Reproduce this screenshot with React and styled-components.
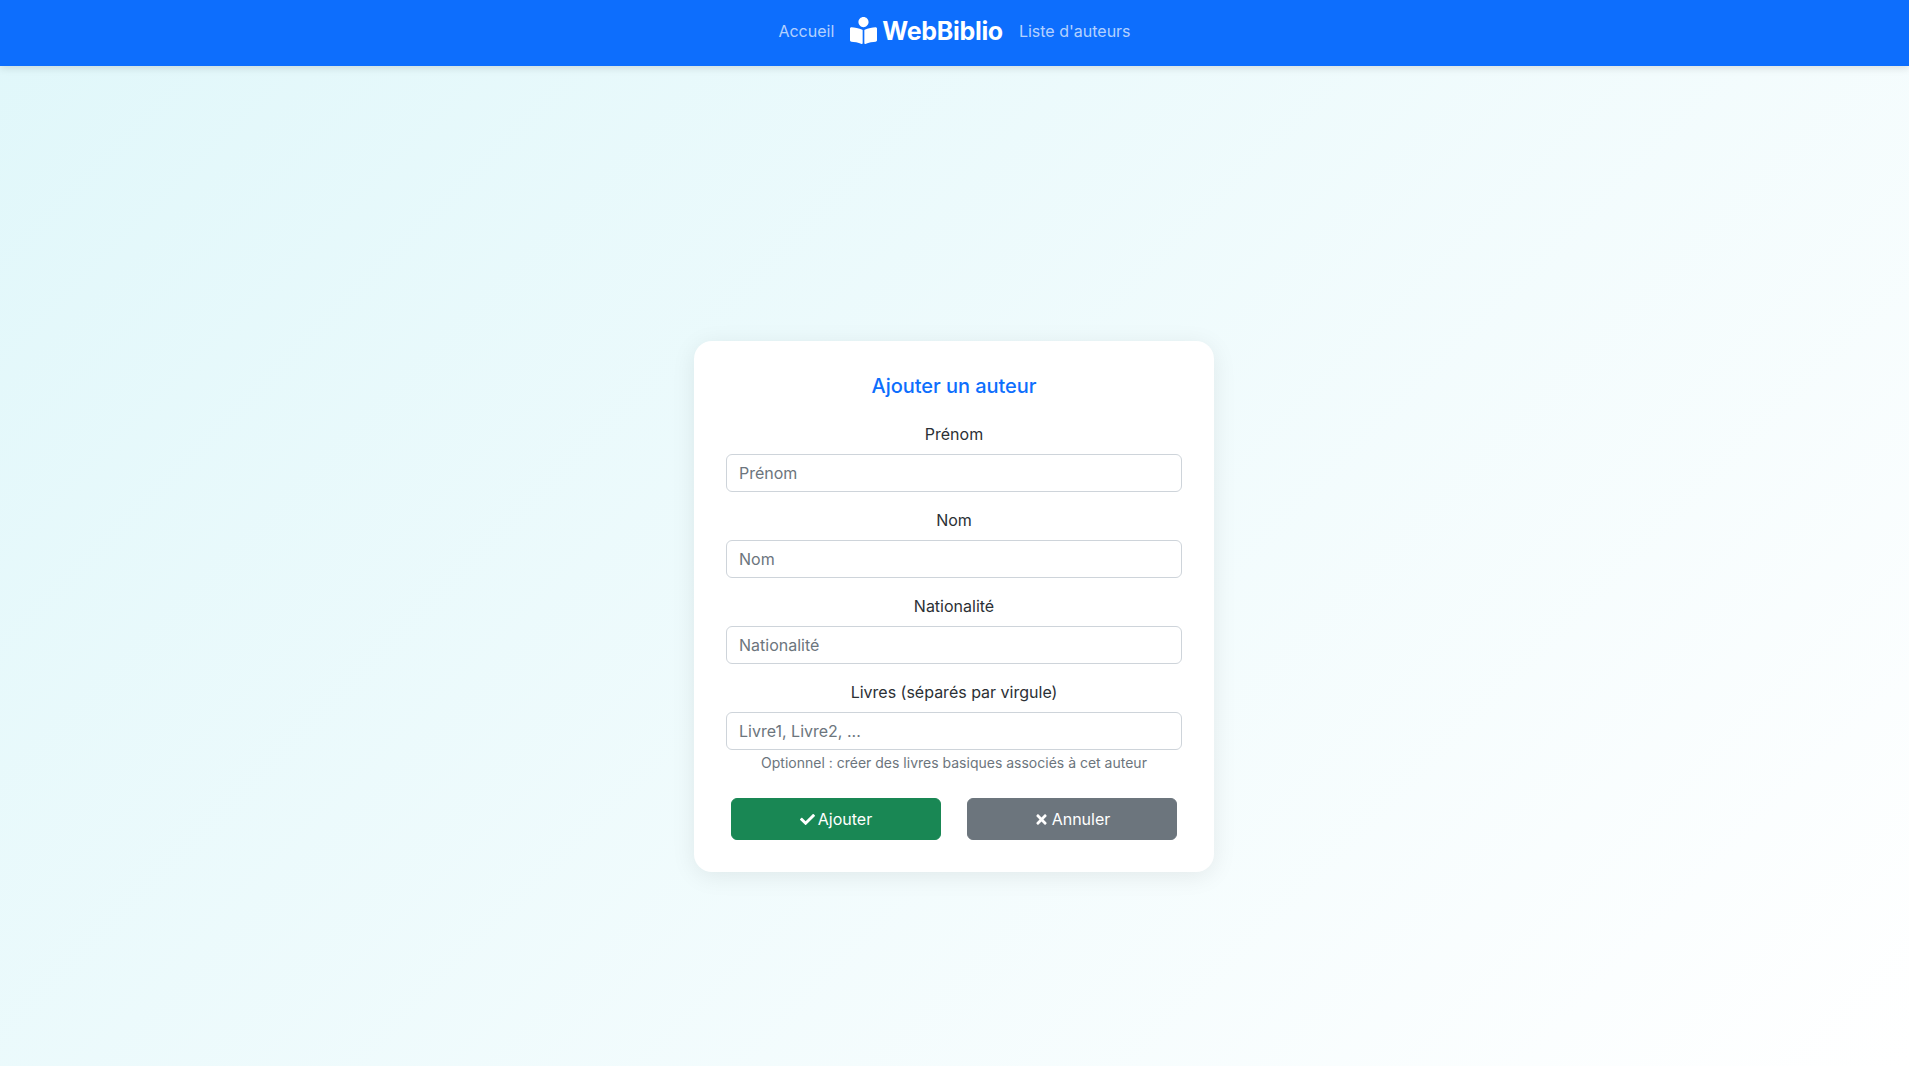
import { createGlobalStyle } from "styled-components";
import styled from "styled-components";
import { FaBookReader, FaCheck, FaTimes } from "react-icons/fa";

const GlobalStyle = createGlobalStyle`
  * {
    box-sizing: border-box;
  }
  html, body {
    margin: 0;
    height: 100%;
  }
  body {
    font-family: Inter, "Liberation Sans", sans-serif;
    font-size: 16px;
    line-height: 1.5;
    color: #212529;
  }
`;

const Page = styled.div`
  min-height: 1066px;
  background: linear-gradient(135deg, #e0f7fa 0%, #ffffff 100%);
`;

const Header = styled.header`
  height: 66px;
  background-color: #0d6efd;
  box-shadow: 0 2px 8px rgba(0, 0, 0, 0.12);
  display: flex;
  align-items: center;
  justify-content: center;
  gap: 16px;
  padding-bottom: 4px;
`;

const NavLink = styled.a`
  color: rgba(255, 255, 255, 0.7);
  font-size: 16px;
  text-decoration: none;
`;

const Brand = styled.a`
  display: flex;
  align-items: center;
  gap: 5px;
  padding-top: 1px;
  color: #fff;
  font-size: 25px;
  font-weight: 700;
  letter-spacing: -0.3px;
  text-decoration: none;
`;

const BrandIcon = styled(FaBookReader)`
  margin-bottom: 3px;
`;

const Main = styled.main`
  display: flex;
  justify-content: center;
  padding: 275px 1px 0 0;
`;

const Card = styled.form`
  width: 520px;
  height: 531px;
  background: #fff;
  border-radius: 18px;
  box-shadow: 0 4px 24px rgba(0, 0, 0, 0.08);
  padding: 32px;
`;

const Title = styled.h2`
  margin: 1px 0 24px;
  height: 24px;
  font-size: 20px;
  line-height: 24px;
  font-weight: 500;
  letter-spacing: -0.05px;
  color: #0d6efd;
  text-align: center;
`;

const Field = styled.div`
  margin-bottom: 16px;
`;

const Label = styled.label`
  display: block;
  margin-bottom: 8px;
  text-align: center;
  color: #2b3035;
`;

const Input = styled.input`
  display: block;
  width: 100%;
  height: 38px;
  padding: 6px 12px;
  font: inherit;
  color: #212529;
  background: #fff;
  border: 1px solid #ced4da;
  border-radius: 6px;
  &::placeholder {
    color: #6c757d;
    opacity: 1;
  }
`;

const Hint = styled.div`
  margin-top: 2px;
  font-size: 14px;
  color: #6c757d;
  text-align: center;
`;

const Actions = styled.div`
  display: flex;
  gap: 26px;
  padding: 0 5px;
  margin-top: 25px;
`;

const Button = styled.button`
  flex: 1;
  height: 42px;
  display: flex;
  align-items: center;
  justify-content: center;
  gap: 3px;
  font: inherit;
  color: #fff;
  background-color: ${(p) => p.$bg};
  border: 1px solid ${(p) => p.$bg};
  border-radius: 6px;
`;

export default function App() {
  return (
    <Page>
      <GlobalStyle />
      <Header>
        <NavLink href="#">Accueil</NavLink>
        <Brand href="#">
          <BrandIcon size={27} />
          WebBiblio
        </Brand>
        <NavLink href="#">Liste d'auteurs</NavLink>
      </Header>
      <Main>
        <Card>
          <Title>Ajouter un auteur</Title>
          <Field>
            <Label>Prénom</Label>
            <Input placeholder="Prénom" />
          </Field>
          <Field>
            <Label>Nom</Label>
            <Input placeholder="Nom" />
          </Field>
          <Field>
            <Label>Nationalité</Label>
            <Input placeholder="Nationalité" />
          </Field>
          <Field>
            <Label>Livres (séparés par virgule)</Label>
            <Input placeholder="Livre1, Livre2, ..." />
            <Hint>Optionnel : créer des livres basiques associés à cet auteur</Hint>
          </Field>
          <Actions>
            <Button type="submit" $bg="#198754">
              <FaCheck size={15} />
              Ajouter
            </Button>
            <Button type="button" $bg="#6c757d">
              <FaTimes size={15} />
              Annuler
            </Button>
          </Actions>
        </Card>
      </Main>
    </Page>
  );
}
